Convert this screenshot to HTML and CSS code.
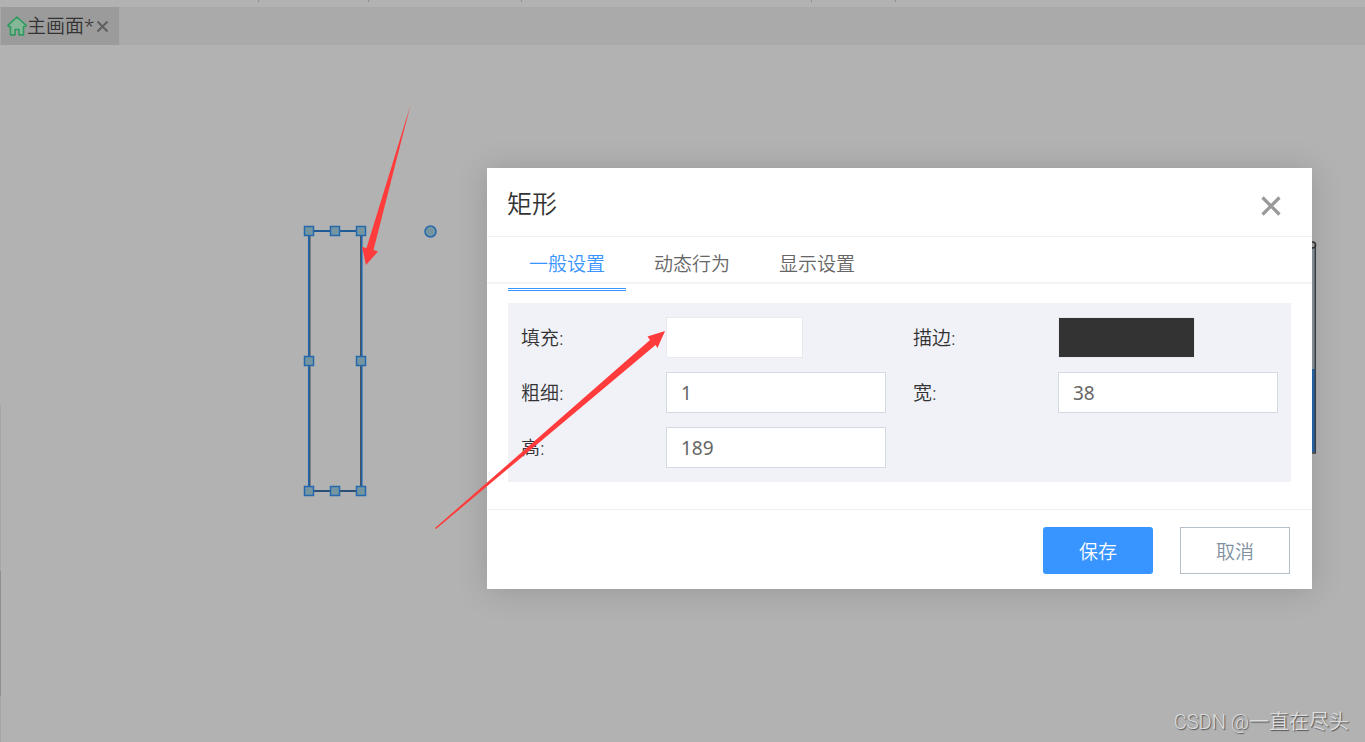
FILE: index.html
```
<!DOCTYPE html>
<html lang="zh-CN">
<head>
    <meta charset="UTF-8">
    <meta name="viewport" content="width=device-width, initial-scale=1.0">
    <title>主画面</title>
    <link rel="stylesheet" href="styles.css">
</head>
<body>
    <div class="editor">
        <div class="toolbar">
            <svg width="900" height="2" viewBox="0 0 900 2" aria-hidden="true">
                <path d="M258.500 0v2M368.500 0v2M521.500 0v2M811.500 0v2M895.500 0v2" stroke="#8f8f8f"/>
            </svg>
        </div>
        <nav class="page-tabs">
            <div class="page-tab">
                <svg class="home-icon" width="20" height="20" viewBox="0 0 20 20" aria-hidden="true">
                    <path d="M10 1 L.9 9.300 Q.8 10.800 3.500 10.500 V18.900 H8 V13.500 H12 V18.900 H16.500 V10.500 Q19.200 10.800 19.100 9.300 Z" fill="#86b698" stroke="#2f9b5e" stroke-width="1.600" stroke-linejoin="round"/>
                </svg>
                <a href="#">主画面*</a>
                <button class="tab-close" type="button" aria-label="关闭页面">
                    <svg width="13" height="13" viewBox="0 0 13 13">
                        <path d="M1.500 1.500l10 10M11.500 1.500l-10 10" stroke="#5f5f5f" stroke-width="2"/>
                    </svg>
                </button>
            </div>
        </nav>
        <main class="canvas">
            <div class="splitter"></div>
            <!-- selected rectangle with its handles -->
            <svg class="selection" width="140" height="280" viewBox="300 220 140 280">
                <path d="M309.500 231v260M361 231v260M309 491h52" fill="none" stroke="#4c5157" stroke-width="2"/>
                <path d="M309 231h52" stroke="#1f5a96" stroke-width="2"/>
                <path d="M309 491h52" stroke="#2a5078" stroke-width="2"/>
                <path d="M308.700 231v260M361.800 231v260" stroke="#1c66b3" stroke-width="1.500"/>
                <g fill="#7595a0" stroke="#2469ad" stroke-width="1.500">
                    <rect x="304.500" y="226.500" width="9" height="9"/>
                    <rect x="330.500" y="226.500" width="9" height="9"/>
                    <rect x="356.500" y="226.500" width="9" height="9"/>
                    <rect x="304.500" y="356.500" width="9" height="9"/>
                    <rect x="356.500" y="356.500" width="9" height="9"/>
                    <rect x="304.500" y="486.500" width="9" height="9"/>
                    <rect x="330.500" y="486.500" width="9" height="9"/>
                    <rect x="356.500" y="486.500" width="9" height="9"/>
                    <circle cx="430.500" cy="231.500" r="5.500"/>
                </g>
            </svg>
            <!-- level gauge, partly under the dialog -->
            <svg class="gauge" width="20" height="220" viewBox="1300 240 20 220">
                <rect x="1300" y="246" width="15" height="123" fill="#8c959d"/>
                <rect x="1300" y="369" width="15" height="83" fill="#2767ac"/>
                <path d="M1315.300 243v210h-15" fill="none" stroke="#3c4248" stroke-width="1.500"/>
                <circle cx="1312.500" cy="245" r="3" fill="#a0a0a0" stroke="#333" stroke-width="1.500"/>
            </svg>
        </main>
    </div>

    <form class="dialog" role="dialog" aria-labelledby="dialogTitle">
        <header class="dialog-header">
            <h2 id="dialogTitle">矩形</h2>
            <button class="dialog-close" type="button" aria-label="关闭">
                <svg width="20" height="20" viewBox="0 0 20 20">
                    <path d="M1.500 1.500l17 17M18.500 1.500l-17 17" stroke="#999" stroke-width="3.200"/>
                </svg>
            </button>
        </header>
        <div class="dialog-tabs">
            <button class="dialog-tab active" type="button">一般设置</button>
            <button class="dialog-tab" type="button">动态行为</button>
            <button class="dialog-tab" type="button">显示设置</button>
        </div>
        <div class="dialog-body">
            <div class="settings">
                <div class="field">
                    <label for="fill">填充:</label>
                    <input class="swatch" type="color" id="fill" value="#ffffff">
                </div>
                <div class="field">
                    <label for="stroke">描边:</label>
                    <input class="swatch" type="color" id="stroke" value="#333333">
                </div>
                <div class="field">
                    <label for="thickness">粗细:</label>
                    <input class="text-box" type="text" id="thickness" value="1">
                </div>
                <div class="field">
                    <label for="width">宽:</label>
                    <input class="text-box" type="text" id="width" value="38">
                </div>
                <div class="field">
                    <label for="height">高:</label>
                    <input class="text-box" type="text" id="height" value="189">
                </div>
            </div>
        </div>
        <footer class="dialog-footer">
            <button class="btn btn-save" type="button">保存</button>
            <button class="btn btn-cancel" type="button">取消</button>
        </footer>
    </form>

    <svg class="arrows" width="680" height="540" viewBox="0 0 680 540" aria-hidden="true">
        <path d="M410.500 105 L366.500 248 L362 247 L366 265 L378 251.500 L373.500 250 Z" fill="#ff3b3b"/>
        <path d="M435 528 L650 340 L647.500 336.500 L665 331 L657.500 348 L655.500 345 L436 529 Z" fill="#ff3b3b"/>
    </svg>
    <div class="watermark">CSDN @一直在尽头</div>
</body>
</html>
```
FILE: styles.css
```
* {
    box-sizing: border-box;
}

body {
    margin: 0;
    background: #b2b2b2;
    color: #333;
    font-family: 'Noto Sans', 'Noto Sans CJK SC', sans-serif;
    font-size: 19px;
    font-weight: 350;
    line-height: 28px;
}

button, input {
    font: inherit;
    margin: 0;
}

button {
    padding: 0;
    border: none;
    background: none;
    cursor: pointer;
}

svg {
    display: block;
}

.editor {
    min-height: 100vh;
    display: flex;
    flex-direction: column;
    overflow: hidden;
}

.toolbar {
    height: 7px;
}

.page-tabs {
    display: flex;
    height: 38px;
    padding-left: 1px;
    background: #aaa;
}

.page-tab {
    display: flex;
    align-items: center;
    padding: 0 10px 0 6px;
    background: #9b9b9b;
}

.page-tab a {
    color: #333;
    text-decoration: none;
}

.tab-close {
    margin-left: 2px;
}

/* Lienzo */
.canvas {
    position: relative;
    flex: 1;
}

.splitter {
    position: absolute;
    left: 0;
    top: 360px;
    bottom: 0;
    width: 1px;
    background: linear-gradient(#a5a5a8 166px, #8e8e92 166px, #8e8e92 291px, #a5a5a8 291px);
}

.selection {
    position: absolute;
    left: 300px;
    top: 175px;
}

.gauge {
    position: absolute;
    right: 45px;
    top: 195px;
}

.dialog {
    position: absolute;
    top: 168px;
    left: 487px;
    right: 53px;
    background: #fff;
    box-shadow: 0 2px 30px rgba(0, 0, 0, 0.15);
}

.dialog-header {
    display: flex;
    justify-content: space-between;
    align-items: center;
    height: 69px;
    padding: 4px 31px 0 20px;
    border-bottom: 1px solid #f0f0f0;
}

.dialog-header h2 {
    margin: 0;
    padding-bottom: 2px;
    font-size: 25px;
    font-weight: 350;
    line-height: 36px;
}

.dialog-close {
    padding-top: 4px;
}

.dialog-tabs {
    display: flex;
    gap: 7px;
    height: 47px;
    padding: 0 21px;
    border-bottom: 2px solid #f3f3f3;
}

.dialog-tab {
    height: 54px;
    padding: 2px 21px 0;
    border-bottom: 3px double transparent;
    color: #666;
}

.dialog-tab.active {
    border-bottom-color: #3894ff;
    color: #3894ff;
}

.dialog-body {
    padding: 19px 21px 27px;
}

.settings {
    display: grid;
    grid-template-columns: repeat(2, minmax(0, 1fr));
    gap: 14px 27px;
    padding: 14px 13px;
    background: #f1f2f8;
}

.field {
    display: flex;
    align-items: center;
    height: 41px;
}

.field label {
    width: 145px;
}

.text-box {
    flex: 1;
    min-width: 0;
    height: 41px;
    padding: 0 14px;
    border: 1px solid #d5d9e5;
    background: #fff;
    color: #666;
    font-weight: 400;
}

.swatch {
    appearance: none;
    width: 137px;
    height: 41px;
    padding: 0;
    border: 1px solid #e9eaf0;
    background: none;
}

.swatch::-webkit-color-swatch-wrapper {
    padding: 0;
}

.swatch::-webkit-color-swatch {
    border: none;
}

.dialog-footer {
    display: flex;
    justify-content: flex-end;
    gap: 27px;
    padding: 17px 22px 15px;
    border-top: 1px solid #f0f0f0;
}

.btn {
    width: 110px;
    height: 47px;
    padding-top: 2px;
}

.btn-save {
    border-radius: 3px;
    background: #3894ff;
    color: #fff;
}

.btn-cancel {
    border: 1px solid #b4bfc9;
    color: #8090a0;
}

.arrows {
    position: absolute;
    top: 0;
    left: 0;
    pointer-events: none;
}

.watermark {
    position: absolute;
    right: 16px;
    bottom: 6px;
    color: #ddd;
    font-family: Roboto, 'Noto Sans CJK SC', sans-serif;
    font-size: 20px;
    text-shadow: 1px 1px 1px #555;
}
```
